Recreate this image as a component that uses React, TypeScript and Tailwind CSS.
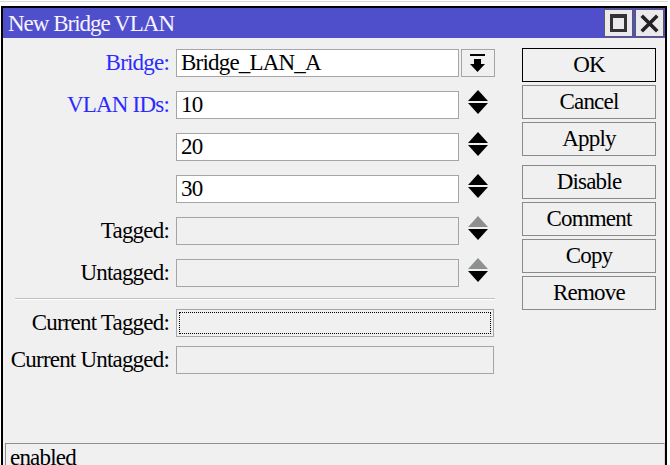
import React from "react";

const font = "font-['Liberation_Serif','Times_New_Roman',serif]";

function UpDown({ disabled }: { disabled?: boolean }) {
  return (
    <svg width="34" height="28" viewBox="0 0 34 28" className="ml-[2px] shrink-0 overflow-visible">
      <polygon points="17,-1 7,10 27,10" fill={disabled ? "#8d918d" : "#000"} />
      <polygon points="7,12 27,12 17,23" fill="#000" />
    </svg>
  );
}

function DropBtn() {
  return (
    <div className="ml-[2px] w-[34px] h-[28px] shrink-0 border border-[#a5a5a5] bg-[#f0f0f0]">
      <svg width="32" height="26" viewBox="0 0 32 26">
        <rect x="8" y="4" width="15" height="2" fill="#000" />
        <rect x="12" y="9" width="7" height="6" fill="#000" />
        <polygon points="8,14 23,14 15.5,22" fill="#000" />
      </svg>
    </div>
  );
}

function Row({
  label,
  blue,
  value,
  white,
  icon,
  className = "",
}: {
  label?: string;
  blue?: boolean;
  value?: string;
  white?: boolean;
  icon?: React.ReactNode;
  className?: string;
}) {
  return (
    <div className={`flex items-center h-[28px] ${className}`}>
      <div className={`w-[166px] shrink-0 text-right whitespace-nowrap ${blue ? "text-[#2b2bff]" : "text-black"}`}>{label}</div>
      <div
        className={`ml-[7px] w-[283px] h-[28px] shrink-0 border border-[#a5a5a5] pl-[4px] flex items-center text-black ${
          white ? "bg-white" : "bg-[#f0f0f0]"
        }`}
      >
        {value}
      </div>
      {icon}
    </div>
  );
}

function Btn({ children, ok, className = "" }: { children: React.ReactNode; ok?: boolean; className?: string }) {
  return (
    <div
      className={`w-[134px] h-[34px] border ${
        ok ? "border-black" : "border-[#8a8a8a]"
      } bg-[#f0f0f0] flex items-center justify-center text-black ${className}`}
    >
      {children}
    </div>
  );
}

export default function App() {
  return (
    <div className={`w-[670px] h-[465px] bg-white overflow-hidden ${font} text-[23px] tracking-[-0.8px] leading-[24px]`}>
      <div className="h-[6px] pt-[1px]">
        <div className="h-[1px] w-[668px] bg-[#dadada]" />
      </div>
      <div className="ml-[1px] w-[666px] h-[480px] border-2 border-black bg-[#f0f0f0] flex flex-col">
        {/* title bar */}
        <div className="h-[30px] shrink-0 bg-[#4f4fcb] flex items-start">
          <div className="flex-1 pl-[5px] pt-[4px] text-[#f6f3ff] tracking-[-1px] whitespace-nowrap">New Bridge VLAN</div>
          <div className="flex gap-[2px] pt-[1px] mr-[1px]">
            <div className="w-[29px] h-[28px] border border-[#5a5a5a] bg-[#ece9ec]">
              <svg width="27" height="26" viewBox="0 0 27 26">
                <rect x="6.5" y="5.5" width="14" height="15" fill="none" stroke="#333" strokeWidth="3" />
                <rect x="5" y="4" width="17" height="4" fill="#333" />
              </svg>
            </div>
            <div className="w-[29px] h-[28px] border border-[#5a5a5a] bg-[#ece9ec]">
              <svg width="27" height="26" viewBox="0 0 27 26">
                <path d="M7 7 L20 20 M20 7 L7 20" stroke="#222" strokeWidth="3.6" strokeLinecap="square" />
              </svg>
            </div>
          </div>
        </div>
        {/* body */}
        <div className="h-[405px] shrink-0 flex pt-[10px]">
          <div className="w-[492px] shrink-0 pt-[1px]">
            <Row label="Bridge:" blue value="Bridge_LAN_A" white icon={<DropBtn />} />
            <Row label="VLAN IDs:" blue value="10" white icon={<UpDown />} className="mt-[14px]" />
            <Row value="20" white icon={<UpDown />} className="mt-[14px]" />
            <Row value="30" white icon={<UpDown />} className="mt-[14px]" />
            <Row label="Tagged:" icon={<UpDown disabled />} className="mt-[14px]" />
            <Row label="Untagged:" icon={<UpDown disabled />} className="mt-[14px]" />
            <div className="mt-[11px] ml-[12px] w-[480px] h-[2px] border-t border-[#c0c0c0] border-b border-b-white" />
            <div className="flex items-center h-[28px] mt-[9px]">
              <div className="w-[166px] shrink-0 text-right text-black whitespace-nowrap">Current Tagged:</div>
              <div className="relative ml-[7px] w-[318px] h-[28px] border border-[#a5a5a5] bg-[#f0f0f0]">
                <div className="absolute inset-[2px] border border-dotted border-black" />
              </div>
            </div>
            <div className="flex items-center h-[28px] mt-[9px]">
              <div className="w-[166px] shrink-0 text-right text-black whitespace-nowrap">Current Untagged:</div>
              <div className="ml-[7px] w-[318px] h-[28px] border border-[#a5a5a5] bg-[#f0f0f0]" />
            </div>
          </div>
          <div className="ml-[27px] flex flex-col">
            <Btn ok>OK</Btn>
            <Btn className="mt-[3px]">Cancel</Btn>
            <Btn className="mt-[3px]">Apply</Btn>
            <Btn className="mt-[9px]">Disable</Btn>
            <Btn className="mt-[3px]">Comment</Btn>
            <Btn className="mt-[3px]">Copy</Btn>
            <Btn className="mt-[3px]">Remove</Btn>
          </div>
        </div>
        {/* status bar */}
        <div className="ml-[2px] h-[40px] border-t border-l border-[#8f8f8f] border-r border-r-[#d8d8d8] pl-[4px] pt-[2px] text-black">
          enabled
        </div>
      </div>
    </div>
  );
}
